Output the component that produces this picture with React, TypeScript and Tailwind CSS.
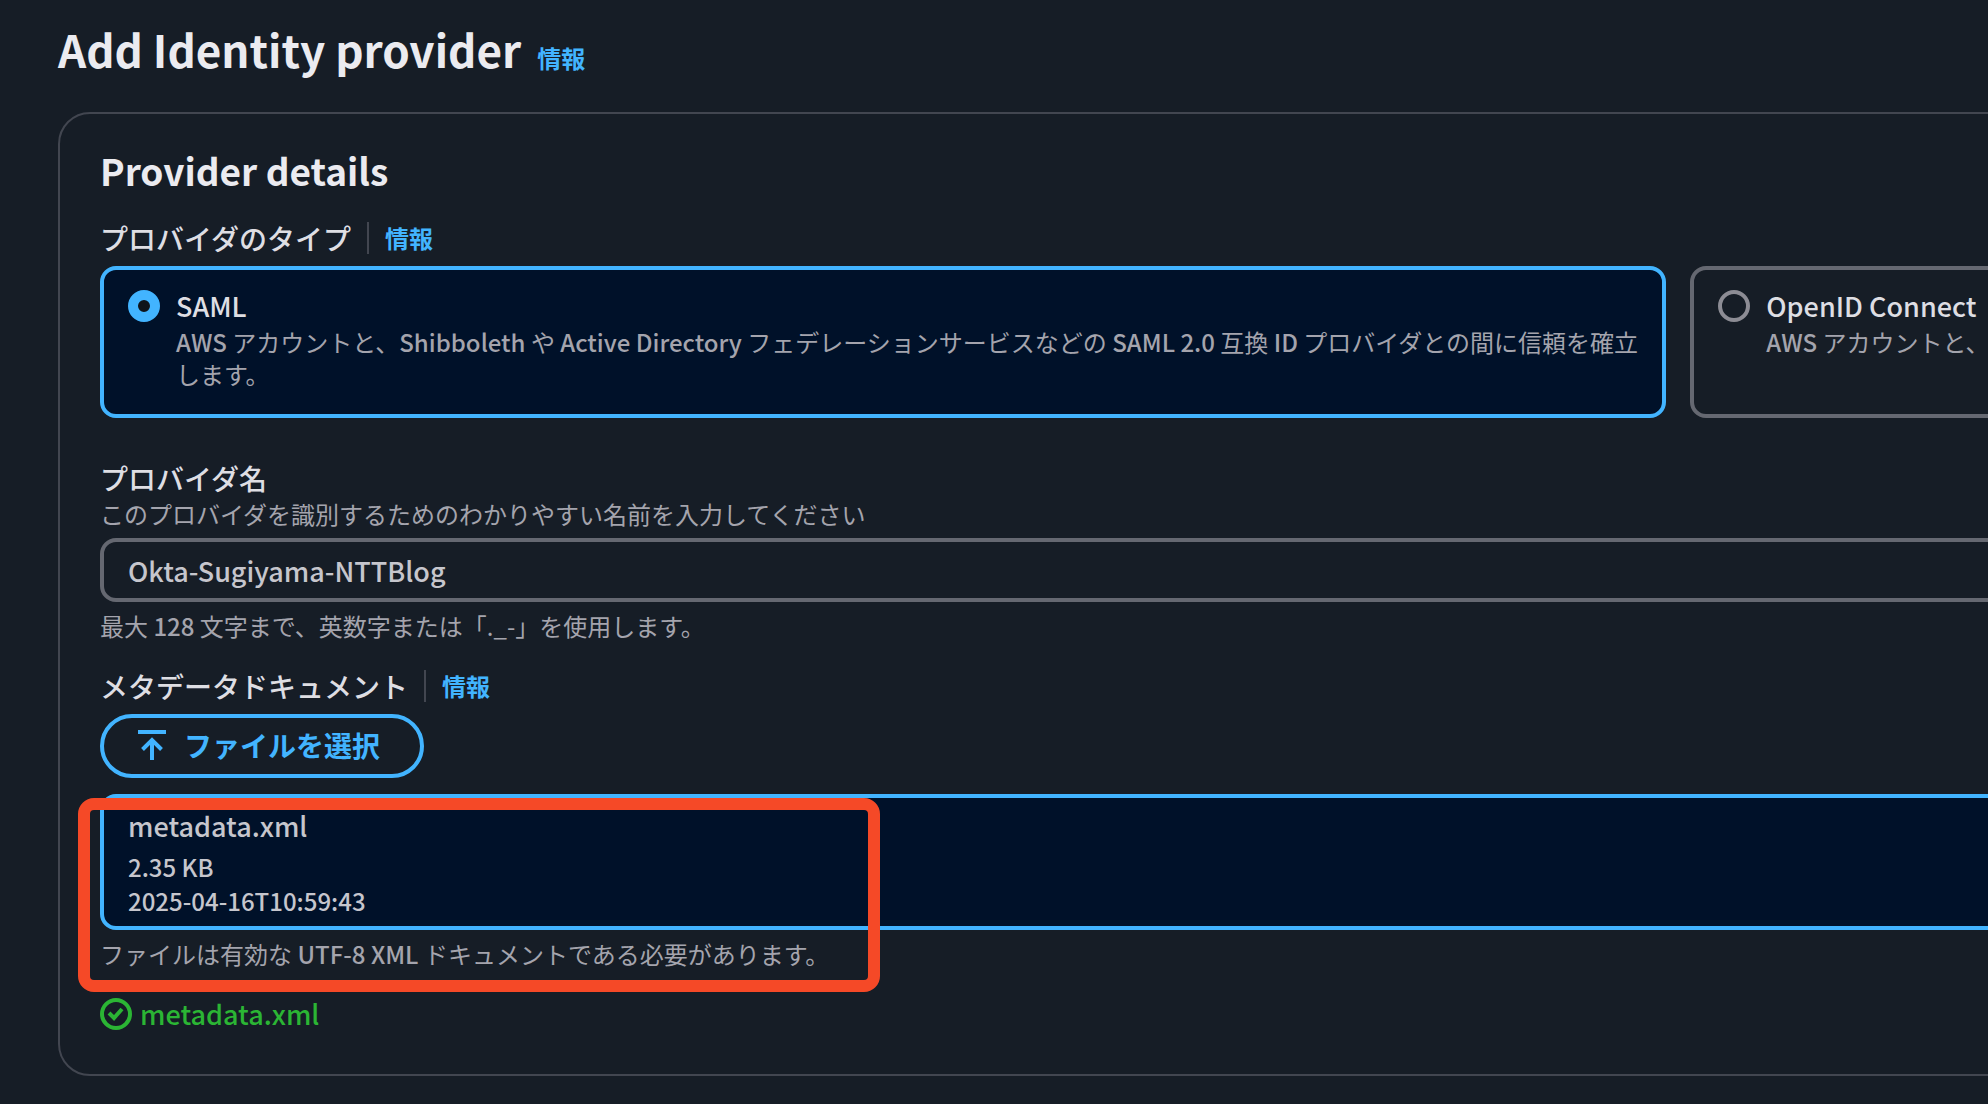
import React from "react";

function InfoLink() {
  return (
    <a href="#info" className="text-2xl leading-8 font-bold text-[#42b4ff]">
      情報
    </a>
  );
}

function Divider() {
  return <span aria-hidden="true" className="h-8 w-0.5 bg-[#424650]" />;
}

/** Body copy with its Latin words set one weight heavier than the kana and kanji around them. */
function MixedText({ text }: { text: string }) {
  return (
    <>
      {text.split(/([A-Za-z0-9][A-Za-z0-9 .-]*[A-Za-z0-9])/).map((part, i) =>
        i % 2 === 1 ? (
          <span key={i} className="font-medium">
            {part}
          </span>
        ) : (
          part
        ),
      )}
    </>
  );
}

interface TileProps {
  title: string;
  description: string;
  checked: boolean;
  onSelect: () => void;
}

function Tile({ title, description, checked, onSelect }: TileProps) {
  return (
    <label
      className={
        checked
          ? "flex gap-4 rounded-2xl border-4 border-[#42b4ff] bg-[#001129] px-6 pt-4 pb-6"
          : "flex gap-4 rounded-2xl border-4 border-[#656871] px-6 pt-4 pb-6"
      }
    >
      <input
        type="radio"
        name="provider-type"
        checked={checked}
        onChange={onSelect}
        className="mt-1 size-8 shrink-0 appearance-none rounded-full border-4 border-[#8c8c94] checked:border-[10px] checked:border-[#42b4ff] checked:bg-[#0f141a]"
      />
      <span className="flex flex-col">
        <span className="text-[27px] leading-10 font-medium text-[#dedee3]">{title}</span>
        <span className="text-2xl leading-8 text-[#a4a4ad]">
          <MixedText text={description} />
        </span>
      </span>
    </label>
  );
}

export default function App() {
  const [type, setType] = React.useState("saml");
  const [name, setName] = React.useState("Okta-Sugiyama-NTTBlog");

  return (
    <main
      lang="ja"
      className="min-h-screen overflow-x-hidden bg-[#161d26] pt-[25px] pl-[58px] font-['Noto_Sans_CJK_JP',sans-serif] text-2xl text-[#c6c6cd]"
    >
      <header className="flex items-baseline gap-4">
        <h1 className="text-[44px] leading-12 font-bold text-[#ebebf0]">Add Identity provider</h1>
        <InfoLink />
      </header>

      <section className="mt-[38px] w-[167.9%] rounded-4xl border-2 border-[#424650] px-10 pt-8 pb-11">
        <h2 className="text-[37px] leading-12 font-bold text-[#ebebf0]">Provider details</h2>

        <fieldset className="mt-6">
          <legend className="float-left flex items-center gap-4">
            <span className="text-[28px] leading-10 font-medium text-[#dedee3]">プロバイダのタイプ</span>
            <Divider />
            <InfoLink />
          </legend>
          <div className="clear-both grid grid-cols-2 gap-6 pt-2">
            <Tile
              title="SAML"
              description="AWS アカウントと、Shibboleth や Active Directory フェデレーションサービスなどの SAML 2.0 互換 ID プロバイダとの間に信頼を確立します。"
              checked={type === "saml"}
              onSelect={() => setType("saml")}
            />
            <Tile
              title="OpenID Connect"
              description="AWS アカウントと、"
              checked={type === "oidc"}
              onSelect={() => setType("oidc")}
            />
          </div>
        </fieldset>

        <div className="mt-10 flex flex-col">
          <label htmlFor="provider-name" className="text-[28px] leading-10 font-medium text-[#dedee3]">
            プロバイダ名
          </label>
          <p id="provider-name-description" className="leading-8 text-[#a4a4ad]">
            このプロバイダを識別するためのわかりやすい名前を入力してください
          </p>
          <input
            id="provider-name"
            type="text"
            value={name}
            onChange={(e) => setName(e.target.value)}
            aria-describedby="provider-name-description provider-name-hint"
            className="mt-2 h-16 rounded-2xl border-4 border-[#656871] px-6 text-[27px] font-medium text-[#c6c6cd]"
          />
          <p id="provider-name-hint" className="mt-2 leading-8 text-[#a4a4ad]">
            <MixedText text="最大 128 文字まで、英数字または「._-」を使用します。" />
          </p>
        </div>

        <div className="mt-6">
          <div className="flex items-center gap-4">
            <span id="metadata-label" className="text-[28px] leading-10 font-medium text-[#dedee3]">
              メタデータドキュメント
            </span>
            <Divider />
            <InfoLink />
          </div>
          <button
            type="button"
            aria-describedby="metadata-label"
            className="mt-2 flex h-16 items-center gap-4 rounded-full border-4 border-[#42b4ff] pr-10 pl-8 text-[28px] font-bold text-[#42b4ff]"
          >
            <svg viewBox="0 0 32 32" className="size-8" fill="none" stroke="currentColor" strokeWidth="4" aria-hidden="true">
              <path d="M2 2h28M16 30V11M6.5 19.5l9.5-9.5 9.5 9.5" />
            </svg>
            ファイルを選択
          </button>

          <div className="relative mt-4">
            <div className="flex flex-col rounded-2xl border-4 border-[#42b4ff] bg-[#001129] px-6 py-2 font-medium">
              <span className="text-[27px] leading-10">metadata.xml</span>
              <span className="mt-1 leading-[34px]">2.35 KB</span>
              <span className="leading-[34px]">2025-04-16T10:59:43</span>
            </div>
            <p className="mt-2 leading-8 text-[#a4a4ad]">
              <MixedText text="ファイルは有効な UTF-8 XML ドキュメントである必要があります。" />
            </p>
            <div
              aria-hidden="true"
              className="pointer-events-none absolute top-1 -bottom-[22px] -left-[22px] w-[802px] rounded-2xl border-12 border-[#f54927]"
            />
          </div>

          <p className="mt-7 flex items-center gap-2 text-[27px] leading-8 font-medium text-[#2bb534]">
            <svg viewBox="0 0 32 32" className="size-8" fill="none" stroke="currentColor" strokeWidth="4" aria-hidden="true">
              <circle cx="16" cy="16" r="14" />
              <path d="M9 15l5 5 8-9" />
            </svg>
            metadata.xml
          </p>
        </div>
      </section>
    </main>
  );
}
